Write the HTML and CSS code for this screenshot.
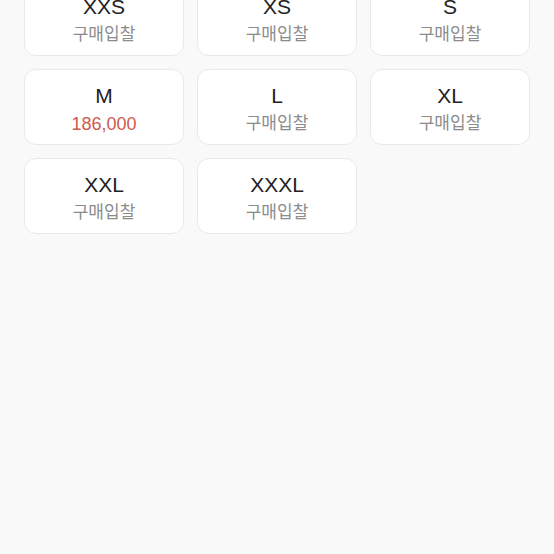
FILE: index.html
```html
<!DOCTYPE html>
<html lang="ko">
<head>
<meta charset="UTF-8">
<meta name="viewport" content="width=device-width, initial-scale=1.0">
<title>사이즈 선택</title>
<link rel="stylesheet" href="styles.css">
</head>
<body>

<div class="size-grid">
    <div class="size-card">
        <div class="size-name">XXS</div>
        <div class="size-price">구매입찰</div>
    </div>
    <div class="size-card">
        <div class="size-name">XS</div>
        <div class="size-price">구매입찰</div>
    </div>
    <div class="size-card">
        <div class="size-name">S</div>
        <div class="size-price">구매입찰</div>
    </div>
    <div class="size-card">
        <div class="size-name">M</div>
        <div class="size-price has-price">186,000</div>
    </div>
    <div class="size-card">
        <div class="size-name">L</div>
        <div class="size-price">구매입찰</div>
    </div>
    <div class="size-card">
        <div class="size-name">XL</div>
        <div class="size-price">구매입찰</div>
    </div>
    <div class="size-card">
        <div class="size-name">XXL</div>
        <div class="size-price">구매입찰</div>
    </div>
    <div class="size-card">
        <div class="size-name">XXXL</div>
        <div class="size-price">구매입찰</div>
    </div>
</div>

</body>
</html>
```

FILE: styles.css
```css
body {
    background-color: #f9f9f9;
    font-family: "Liberation Sans", "Noto Sans CJK KR", sans-serif;
    margin: 0;
    height: 100vh;
    overflow: hidden;
}
.size-grid {
    display: grid;
    grid-template-columns: repeat(3, 160px);
    grid-auto-rows: 76px;
    gap: 13px;
    margin-top: -20px;
    padding-left: 24px;
}
.size-card {
    background-color: #fff;
    border: 1px solid #e9e9e9;
    border-radius: 12px;
    display: flex;
    flex-direction: column;
    align-items: center;
    justify-content: center;
    padding-top: 5px;
    box-sizing: border-box;
}
.size-name {
    font-size: 21px;
    line-height: 26px;
    color: #222;
}
.size-price {
    font-size: 17px;
    line-height: 26px;
    margin-top: 2px;
    color: #8c8c8c;
}
.size-price.has-price {
    font-size: 18px;
    color: #cf5a4f;
}
```
